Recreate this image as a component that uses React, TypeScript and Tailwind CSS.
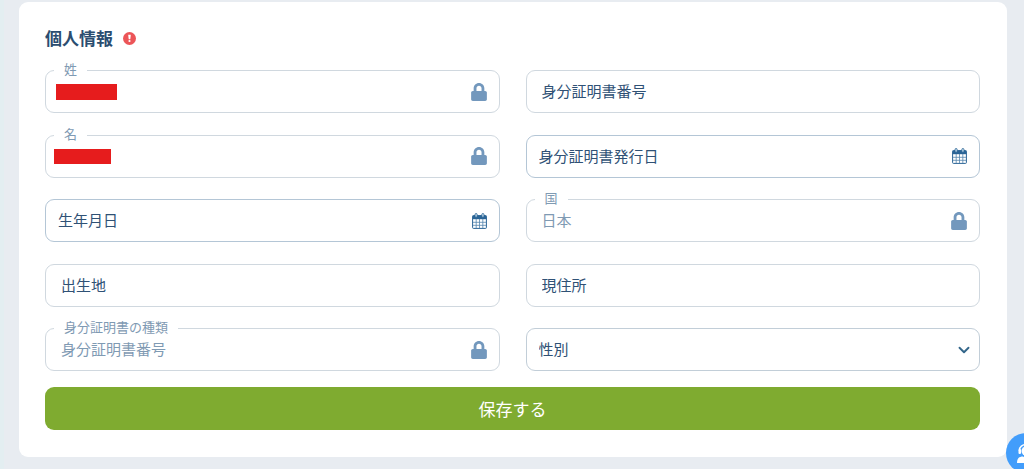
import type { ReactNode } from 'react'
import { FaLock } from 'react-icons/fa'
import { ChevronDown } from 'lucide-react'
import clsx from 'clsx'

function CalendarIcon() {
  return (
    <svg viewBox="0 0 15 16" className="h-4 w-[15px]" fill="none" aria-hidden="true">
      <rect x=".6" y="2.6" width="13.8" height="12.8" rx=".8" stroke="#2a6496" />
      <path d="M.6 2.6h13.8v3.6H.6z" fill="#2a6496" />
      <path
        d="M1 9.3h13M1 12.3h13M4.2 6v9M7.5 6v9M10.8 6v9"
        stroke="#5485ad"
        strokeWidth=".8"
      />
      <rect x="3" y=".5" width="2.2" height="3.8" rx="1.1" fill="#c9dcec" stroke="#2a6496" strokeWidth=".8" />
      <rect x="9.8" y=".5" width="2.2" height="3.8" rx="1.1" fill="#c9dcec" stroke="#2a6496" strokeWidth=".8" />
    </svg>
  )
}

interface FieldProps {
  id: string
  label: string
  value?: string
  locked?: boolean
  date?: boolean
  children?: ReactNode
}

function Field({ id, label, value, locked, date, children }: FieldProps) {
  return (
    <div
      className={clsx(
        'relative flex h-[43px] items-center rounded-[9px] border',
        date ? 'border-[#b4c6d6]' : 'border-[#d0d8df]'
      )}
    >
      {locked && (
        <label
          htmlFor={id}
          className="absolute -top-3 left-2 bg-white px-[10px] text-[13px] leading-5 text-[#7f9ab3]"
        >
          {label}
        </label>
      )}
      {children}
      <input
        id={id}
        type="text"
        aria-label={locked ? undefined : label}
        readOnly={locked}
        defaultValue={value}
        placeholder={locked ? undefined : label}
        className={clsx(
          'h-full w-full min-w-0 rounded-[9px] bg-transparent pr-10 pb-[2px] text-[15px] outline-none placeholder:text-[#2f5175]',
          date ? 'pl-3' : 'pl-[15px]',
          locked ? 'text-[#7f9ab3]' : 'text-[#2f5175]'
        )}
      />
      <span className="pointer-events-none absolute inset-y-0 right-3 flex items-center">
        {locked && <FaLock className="h-[18px] w-4 text-[#7398bd]" />}
        {date && <CalendarIcon />}
      </span>
    </div>
  )
}

export default function App() {
  return (
    <div className="relative min-h-screen overflow-hidden border-l-4 border-[#e3eef1] bg-[#e8ecf1] pt-[2px] pr-[17px] pb-3 pl-[15px] font-['Noto_Sans_CJK_JP',sans-serif]">
      <form
        className="rounded-[9px] bg-white pt-6 pr-[27px] pb-[27px] pl-[26px]"
        onSubmit={(e) => e.preventDefault()}
      >
        <header className="mb-5 flex h-6 items-center gap-[10px]">
          <h2 className="text-[17px] leading-6 font-bold text-[#2b4d70]">個人情報</h2>
          <svg viewBox="0 0 13 13" className="size-[13px]" role="img" aria-label="必須">
            <circle cx="6.5" cy="6.5" r="6.5" fill="#ec5558" />
            <path d="M5.2 2.8h2.6l-.5 4.4H5.7z" fill="#fff" />
            <circle cx="6.5" cy="9" r="1.1" fill="#fff" />
          </svg>
        </header>

        <div className="grid min-h-[301px] grid-cols-2 content-between gap-x-[26px]">
          <Field id="last-name" label="姓" locked>
            <span className="absolute left-[10px] h-4 w-[61px] bg-[#e61c1d]" />
          </Field>
          <Field id="doc-number" label="身分証明書番号" />
          <Field id="first-name" label="名" locked>
            <span className="absolute left-2 h-[15px] w-[57px] bg-[#e61c1d]" />
          </Field>
          <Field id="issue-date" label="身分証明書発行日" date />
          <Field id="birth-date" label="生年月日" date />
          <Field id="country" label="国" value="日本" locked />
          <Field id="birth-place" label="出生地" />
          <Field id="address" label="現住所" />
          <Field id="doc-type" label="身分証明書の種類" value="身分証明書番号" locked />
          <div className="relative flex h-[43px] items-center rounded-[9px] border border-[#c2ced8]">
            <select
              aria-label="性別"
              defaultValue=""
              className="h-full w-full appearance-none rounded-[9px] bg-transparent pr-10 pl-3 text-[15px] text-[#2f5175] outline-none"
            >
              <option value="">性別</option>
              <option value="male">男性</option>
              <option value="female">女性</option>
            </select>
            <ChevronDown
              className="pointer-events-none absolute right-[6px] size-[18px] text-[#33668a]"
              strokeWidth={2.5}
            />
          </div>
        </div>

        <button
          type="submit"
          className="mt-4 h-[43px] w-full rounded-[9px] bg-[#7fab30] text-[17px] text-white"
        >
          保存する
        </button>
      </form>

      <button
        type="button"
        aria-label="サポート"
        className="fixed -right-[22px] -bottom-1 size-10 rounded-full bg-[#429dfb]"
      >
        <svg viewBox="0 0 40 40" className="size-10" fill="none" aria-hidden="true">
          <path d="M13.5 18v-1a6.5 5.5 0 0 1 13 0v1" stroke="#fff" strokeWidth="1.5" />
          <rect x="12.5" y="16" width="2.5" height="5" rx="1" fill="#fff" />
          <rect x="25" y="16" width="2.5" height="5" rx="1" fill="#fff" />
          <circle cx="20" cy="18" r="4.5" fill="#fff" />
          <path d="M11 30c0-4.5 2-6.5 6-6.5l3 2 3-2c4 0 6 2 6 6.5z" fill="#fff" />
        </svg>
      </button>
    </div>
  )
}
